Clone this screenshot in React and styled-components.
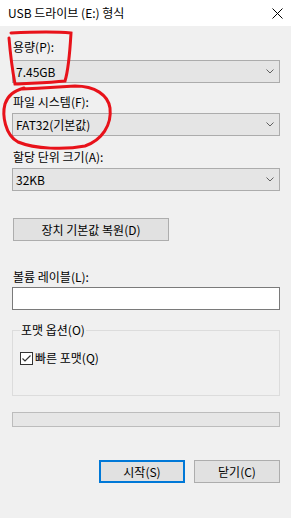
import React from "react";
import styled, { createGlobalStyle } from "styled-components";

const GlobalStyle = createGlobalStyle`
  html, body {
    margin: 0;
    padding: 0;
    background: #f0f0f0;
  }
  body {
    font-family: "Noto Sans CJK KR", "Noto Sans", sans-serif;
    font-size: 12px;
    color: #000;
  }
`;

function FormatDialog() {
  return (
    <Window>
      <TitleBar>
        <Title>USB 드라이브 (E:) 형식</Title>
        <CloseIcon width="11" height="11" viewBox="0 0 11 11">
          <path d="M0.5 0.5 L10.5 10.5 M10.5 0.5 L0.5 10.5" stroke="#000" strokeWidth="1" />
        </CloseIcon>
      </TitleBar>

      <Body>
        <Label $mt={13} $mb={5}>용량(P):</Label>
        <Select>
          7.45GB
          <Chevron />
        </Select>

        <Label $mt={11} $mb={3}>파일 시스템(F):</Label>
        <Select>
          FAT32(기본값)
          <Chevron />
        </Select>

        <Label $mt={13} $mb={3}>할당 단위 크기(A):</Label>
        <Select>
          32KB
          <Chevron />
        </Select>

        <RestoreButton>장치 기본값 복원(D)</RestoreButton>

        <Label $mt={28} $mb={2}>볼륨 레이블(L):</Label>
        <TextInput />

        <Group>
          <Legend>포맷 옵션(O)</Legend>
          <CheckRow>
            <CheckBox>
              <svg width="11" height="11" viewBox="0 0 11 11">
                <path d="M1.5 5.5 L4 8 L9.5 2.5" fill="none" stroke="#333" strokeWidth="1.2" />
              </svg>
            </CheckBox>
            빠른 포맷(Q)
          </CheckRow>
        </Group>

        <Progress />

        <ButtonRow>
          <DialogButton $primary>시작(S)</DialogButton>
          <DialogButton>닫기(C)</DialogButton>
        </ButtonRow>
      </Body>

      <Scribble width="291" height="518" viewBox="0 0 291 518">
        <path
          d="M11 33 C30 32 52 31 71 33 C70 50 69 68 65 81 C48 83 30 83 15 84 C12 68 10 50 9 38"
          fill="none"
          stroke="#e8121a"
          strokeWidth="3"
          strokeLinecap="round"
        />
        <path
          d="M22 89 C40 88 60 87 75 86 C95 86 108 95 110 108 C112 125 102 140 85 146 C65 150 35 149 18 142 C5 135 2 115 5 104 C8 95 14 91 24 88"
          fill="none"
          stroke="#e8121a"
          strokeWidth="3"
          strokeLinecap="round"
        />
      </Scribble>
    </Window>
  );
}

function Chevron() {
  return (
    <ChevronIcon width="8" height="5" viewBox="0 0 8 5">
      <path d="M0.5 0.5 L4 4 L7.5 0.5" fill="none" stroke="#606060" strokeWidth="1" />
    </ChevronIcon>
  );
}

const Window = styled.div`
  position: relative;
  width: 291px;
  height: 518px;
  background: #f0f0f0;
  overflow: hidden;
`;

const TitleBar = styled.div`
  height: 26px;
  background: #fff;
  display: flex;
  align-items: center;
  justify-content: space-between;
  padding: 0 8px;
`;

const Title = styled.span`
  font-size: 12px;
  line-height: 16px;
`;

const CloseIcon = styled.svg`
  display: block;
  margin-right: 0;
`;

const Body = styled.div`
  display: flex;
  flex-direction: column;
  padding: 0 11px 0 12px;
`;

const Label = styled.div`
  line-height: 16px;
  padding-left: 1px;
  margin-top: ${(p) => p.$mt}px;
  margin-bottom: ${(p) => p.$mb}px;
`;

const Select = styled.div`
  box-sizing: border-box;
  height: 23px;
  background: #e5e5e5;
  border: 1px solid #acacac;
  display: flex;
  align-items: center;
  justify-content: space-between;
  padding: 0 5px 0 3px;
  line-height: 16px;
`;

const ChevronIcon = styled.svg`
  display: block;
`;

const RestoreButton = styled.button`
  box-sizing: border-box;
  align-self: flex-start;
  margin: 27px 0 0 1px;
  width: 156px;
  height: 23px;
  background: #e1e1e1;
  border: 1px solid #adadad;
  font: inherit;
  color: #000;
  padding: 0;
`;

const TextInput = styled.input`
  box-sizing: border-box;
  height: 23px;
  background: #fff;
  border: 1px solid #7a7a7a;
  margin: 0;
  padding: 0 3px;
  font: inherit;
  outline: none;
`;

const Group = styled.fieldset`
  margin: 12px 0 0 0;
  border: 1px solid #dcdcdc;
  padding: 0 7px 29px 7px;
  min-width: 0;
`;

const Legend = styled.legend`
  padding: 0 1px;
  line-height: 16px;
`;

const CheckRow = styled.label`
  display: flex;
  align-items: center;
  gap: 2px;
  margin-top: 12px;
  line-height: 16px;
  height: 16px;
`;

const CheckBox = styled.span`
  box-sizing: border-box;
  width: 13px;
  height: 13px;
  background: #fff;
  border: 1px solid #333;
  display: flex;
  align-items: center;
  justify-content: center;
`;

const Progress = styled.div`
  box-sizing: border-box;
  margin-top: 16px;
  height: 15px;
  background: #e6e6e6;
  border: 1px solid #bcbcbc;
`;

const ButtonRow = styled.div`
  display: flex;
  justify-content: flex-end;
  gap: 9px;
  margin-top: 33px;
`;

const DialogButton = styled.button`
  box-sizing: border-box;
  width: 86px;
  height: 23px;
  background: #e1e1e1;
  border: ${(p) => (p.$primary ? "2px solid #0078d7" : "1px solid #adadad")};
  font: inherit;
  color: #000;
  padding: 0;
`;

const Scribble = styled.svg`
  position: absolute;
  left: 0;
  top: 0;
  pointer-events: none;
`;

export default function App() {
  return (
    <>
      <GlobalStyle />
      <FormatDialog />
    </>
  );
}
